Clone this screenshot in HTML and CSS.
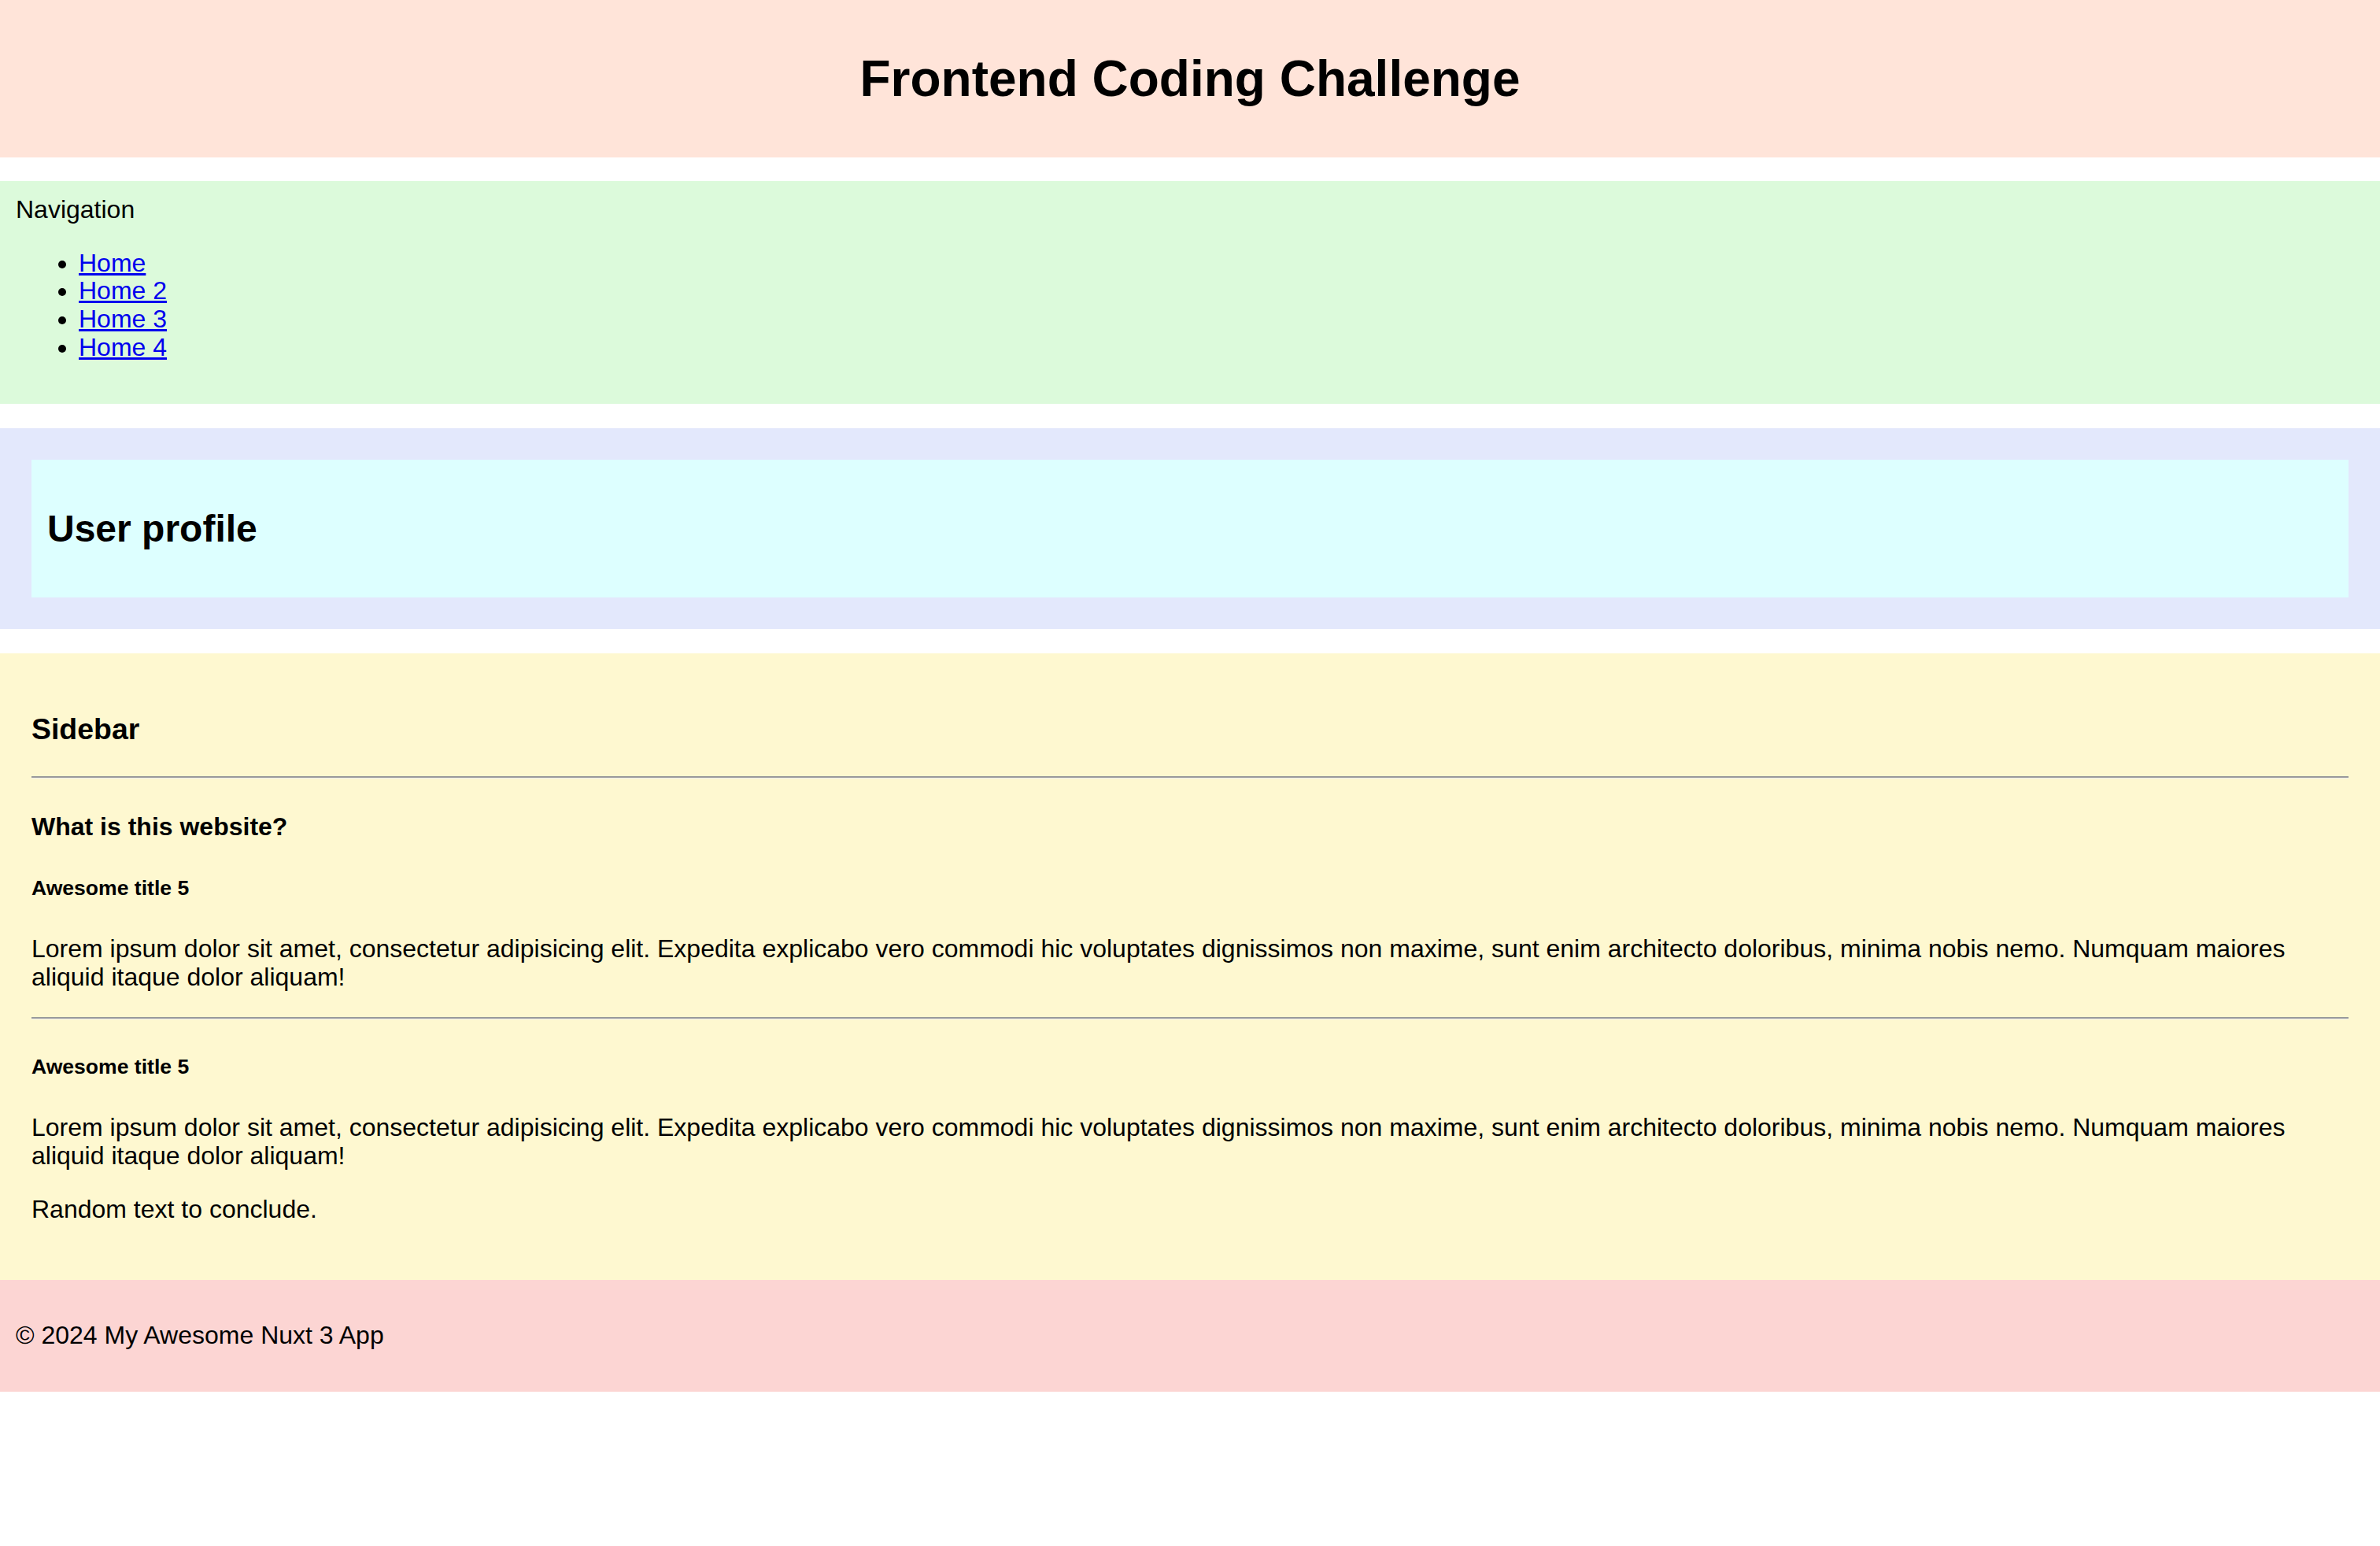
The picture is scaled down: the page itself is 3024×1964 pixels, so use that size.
FILE: index.html
```html
<!DOCTYPE html>
<html lang="en">
<head>
<meta charset="utf-8">
<title>Frontend Coding Challenge</title>
<link rel="stylesheet" href="styles.css">
</head>
<body>
<div class="page">
  <header class="site-header">
    <h1 class="site-title">Frontend Coding Challenge</h1>
  </header>
  <nav class="site-nav">
    <div class="nav-label">Navigation</div>
    <ul class="nav-list">
      <li><a href="#">Home</a></li>
      <li><a href="#">Home 2</a></li>
      <li><a href="#">Home 3</a></li>
      <li><a href="#">Home 4</a></li>
    </ul>
  </nav>
  <main class="main">
    <section class="profile">
      <h2 class="profile-title">User profile</h2>
    </section>
  </main>
  <aside class="sidebar">
    <h3 class="sidebar-title">Sidebar</h3>
    <hr class="rule">
    <h4 class="sidebar-question">What is this website?</h4>
    <h5 class="sidebar-sub">Awesome title 5</h5>
    <p class="text">Lorem ipsum dolor sit amet, consectetur adipisicing elit. Expedita explicabo vero commodi hic voluptates dignissimos non maxime, sunt enim architecto doloribus, minima nobis nemo. Numquam maiores aliquid itaque dolor aliquam!</p>
    <hr class="rule">
    <h5 class="sidebar-sub">Awesome title 5</h5>
    <p class="text">Lorem ipsum dolor sit amet, consectetur adipisicing elit. Expedita explicabo vero commodi hic voluptates dignissimos non maxime, sunt enim architecto doloribus, minima nobis nemo. Numquam maiores aliquid itaque dolor aliquam!</p>
    <p class="text">Random text to conclude.</p>
  </aside>
  <footer class="site-footer">
    <p class="text">© 2024 My Awesome Nuxt 3 App</p>
  </footer>
</div>
</body>
</html>
```
FILE: styles.css
```css
html, body {
  margin: 0;
  padding: 0;
  background: #ffffff;
}

body {
  font-family: "Liberation Sans", Arial, Helvetica, sans-serif;
  font-size: 32px;
  color: #000000;
}

.page {
  display: flex;
  flex-direction: column;
}

.site-header {
  background: #ffe4d9;
  padding: 20px;
  margin-bottom: 30px;
}

.site-title {
  font-size: 64px;
  font-weight: bold;
  text-align: center;
  margin: 42.88px 0;
}

.site-nav {
  background: #dcfadb;
  padding: 19px 20px 21px;
  margin-bottom: 31px;
  line-height: 1.12;
}

.nav-list {
  margin: 32px 0;
  padding-left: 80px;
}

.nav-list a {
  color: #0000ee;
  text-decoration: underline;
}

.main {
  background: #e3e8fc;
  padding: 40px;
  margin-bottom: 31px;
}

.profile {
  background: #ddffff;
  padding: 20px;
}

.profile-title {
  font-size: 48px;
  font-weight: bold;
  margin: 39.84px 0;
}

.sidebar {
  background: #fef8d0;
  padding: 38px 40px 40px;
}

.sidebar-title {
  font-size: 37.44px;
  font-weight: bold;
  margin: 37.44px 0;
  line-height: 1.17;
}

.sidebar-question {
  font-size: 32px;
  font-weight: bold;
  margin: 42.56px 0;
}

.sidebar-sub {
  font-size: 26.56px;
  font-weight: bold;
  margin: 44.36px 0;
}

.text {
  margin: 32px 0;
  line-height: 1.12;
}

.rule {
  border: 0;
  border-top: 2px solid #9a9a9a;
  border-bottom: 1px solid #eeeeee;
  margin: 16px 0;
  height: 0;
}

.site-footer {
  background: #fcd5d3;
  padding: 21px 20px;
}
```
